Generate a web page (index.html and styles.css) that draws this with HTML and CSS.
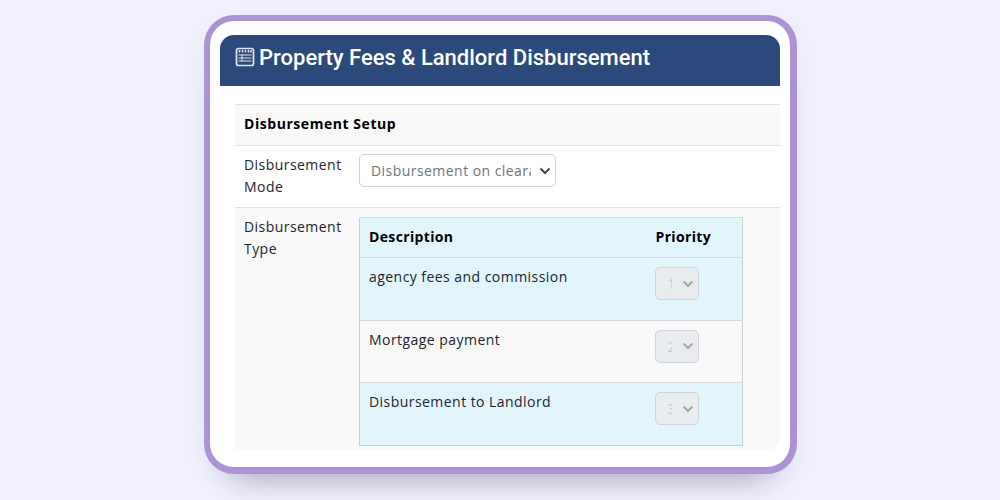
FILE: index.html
```html
<!DOCTYPE html>
<html lang="en">
<head>
  <meta charset="UTF-8" />
  <title>Property Fees &amp; Landlord Disbursement</title>
  <link rel="stylesheet" href="styles.css">
</head>
<body>

<div class="card">
  <header class="card-head">
    <svg class="head-icon" width="20" height="20" viewBox="0 0 20 20" fill="none" stroke="currentColor">
      <rect x="1.5" y="1.5" width="17" height="17" rx="2" stroke-width="1.7"/>
      <path d="M4.5 3v2.5M7.5 3v2.5M10.5 3v2.5M13.5 3v2.5M16 3v2.5" stroke-width="1.5"/>
      <path d="M3.5 8h13M3.5 11h13M3.5 14h13" stroke-width="1.2"/>
      <path d="M7 7.5v7" stroke-width="1"/>
    </svg>
    <h1>Property Fees &amp; Landlord Disbursement</h1>
  </header>

  <table class="setup">
    <tr class="row-head">
      <th colspan="2">Disbursement Setup</th>
    </tr>
    <tr class="row-mode">
      <td class="label">Disbursement Mode</td>
      <td>
        <select class="mode-select">
          <option>Disbursement on clearance</option>
        </select>
      </td>
    </tr>
    <tr class="row-type">
      <td class="label">Disbursement Type</td>
      <td>
        <table class="types">
          <thead>
            <tr>
              <th>Description</th>
              <th class="col-priority">Priority</th>
            </tr>
          </thead>
          <tbody>
            <tr class="blue">
              <td>agency fees and commission</td>
              <td><select class="priority" disabled><option>1</option></select></td>
            </tr>
            <tr>
              <td>Mortgage payment</td>
              <td><select class="priority" disabled><option>2</option></select></td>
            </tr>
            <tr class="blue">
              <td>Disbursement to Landlord</td>
              <td><select class="priority" disabled><option>3</option></select></td>
            </tr>
          </tbody>
        </table>
      </td>
    </tr>
  </table>
</div>

</body>
</html>
```

FILE: styles.css
```css
* {
  box-sizing: border-box;
}

body {
  margin: 0;
  height: 500px;
  overflow: hidden;
  background-color: #f2f1fd;
  font-family: 'Open Sans', sans-serif;
  font-size: 14px;
  letter-spacing: 0.45px;
  color: #212529;
}

.card {
  width: 593px;
  height: 459px;
  margin: 15px 0 0 204px;
  padding: 14px 10px 0;
  background: white;
  border-style: solid;
  border-color: #ac93d6;
  border-width: 6px 7px 7px 6px;
  border-radius: 30px;
  box-shadow: 0 32px 30px -30px rgba(60, 60, 80, 0.4), 0 10px 40px -4px rgba(80, 80, 140, 0.09);
}

.card-head {
  display: flex;
  align-items: center;
  gap: 4px;
  height: 51px;
  padding: 0 0 7px 15px;
  background-color: #2b4a7b;
  border-radius: 14px 14px 0 0;
  color: white;
  letter-spacing: 0;
}

.head-icon {
  flex-shrink: 0;
  color: #dfe6f1;
}

.card-head h1 {
  margin: 0;
  font-family: Roboto, sans-serif;
  font-size: 22px;
  font-weight: 500;
}

.setup {
  width: 545px;
  margin: 18px 0 0 15px;
  border-collapse: collapse;
}

.setup > tbody > tr > th,
.setup > tbody > tr > td {
  padding: 8px 9px;
  text-align: left;
  vertical-align: top;
  border-top: 1px solid #dee2e6;
  line-height: 22px;
}

.setup > tbody > .row-head > th {
  height: 41px;
  background-color: #f9f9f9;
  color: black;
  letter-spacing: 0.55px;
}

.row-mode > td {
  height: 62px;
}

.setup > tbody > .row-type > td {
  height: 242px;
  background-color: #f9f9f9;
  padding-bottom: 3px;
}

.row-type > td:last-child {
  border-bottom-right-radius: 12px;
}

.setup > tbody > tr > .label {
  width: 115px;
  padding-right: 0;
}

.mode-select,
.priority {
  display: block;
  height: 33px;
  border: 1px solid #ced4da;
  border-radius: 5px;
  font-family: inherit;
  font-size: 14px;
  letter-spacing: inherit;
  appearance: none;
  background-repeat: no-repeat;
  background-image: url("data:image/svg+xml,%3Csvg xmlns='http://www.w3.org/2000/svg' width='12' height='8'%3E%3Cpath d='M1.5 1.5L6 6l4.5-4.5' fill='none' stroke='%23444' stroke-width='2'/%3E%3C/svg%3E");
}

.mode-select {
  width: 197px;
  padding: 0 24px 0 11px;
  background-color: white;
  background-position: right 4px center;
  color: #6c757d;
}

.types {
  width: 384px;
  margin-top: 1px;
  border-collapse: collapse;
  border: 1px solid #c8cdd0;
}

.types th,
.types td {
  padding: 9px;
  text-align: left;
  vertical-align: top;
  line-height: 20px;
  border-top: 1px solid #d5d9dc;
}

.types thead tr,
.types .blue {
  background-color: #e2f5fd;
}

.types th {
  height: 40px;
  color: black;
  letter-spacing: 0.35px;
}

.types td {
  height: 62.7px;
}

.types .col-priority {
  width: 96px;
}

.priority {
  width: 44px;
  margin-left: -1px;
  padding: 0 26px 0 12px;
  background-color: #e9ecef;
  background-position: right 4px center;
  background-image: url("data:image/svg+xml,%3Csvg xmlns='http://www.w3.org/2000/svg' width='12' height='8'%3E%3Cpath d='M1.5 1.5L6 6l4.5-4.5' fill='none' stroke='%23a5a8ab' stroke-width='2'/%3E%3C/svg%3E");
  color: #c4c8cc;
  opacity: 1;
}
```
